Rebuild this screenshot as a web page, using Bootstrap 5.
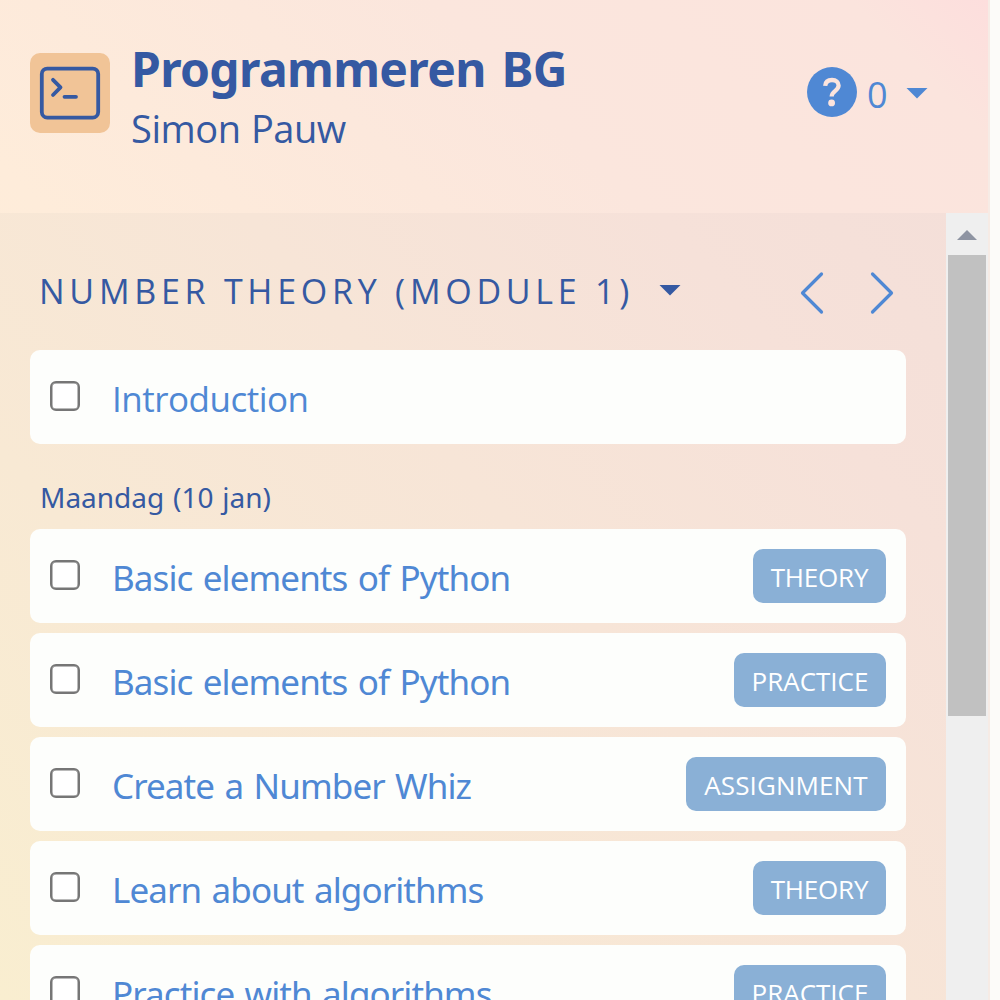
<!DOCTYPE html>
<html lang="nl">
<head>
<meta charset="utf-8">
<meta name="viewport" content="width=device-width, initial-scale=1">
<title>Programmeren BG</title>
<link href="https://cdn.jsdelivr.net/npm/bootstrap@5.3.0/dist/css/bootstrap.min.css" rel="stylesheet">
<style>
  :root { --ink: #3559a2; --blue: #4f88d4; }
  body { font-family: "Open Sans", "Noto Sans", sans-serif; background: #fcfbf9; color: var(--ink); height: 1000px; }
  .side { width: 990px; height: 1000px; border-right: 2px solid #f6ebe5; background: linear-gradient(45deg, #fdf1d5 0%, #feecda 42%, #fbe6dd 72%, #fbe4dd 93%, #fddedd 100%); }
  .top-area { height: 213px; padding: 43px 60px 0 30px; }
  .logo { width: 80px; height: 80px; margin-top: 10px; border-radius: 10px; background: #f1c497; }
  .logo svg, .q-icon, .arrow { display: block; }
  .heading { margin-left: 21px; white-space: nowrap; }
  .course { font-family: "Noto Sans", sans-serif; font-size: 48px; font-weight: 700; line-height: 52px; letter-spacing: -.65px; word-spacing: 4px; }
  .user { font-size: 38px; line-height: 54px; margin-top: 6px; letter-spacing: -.45px; word-spacing: 1px; }
  .help { width: 121px; margin-top: 24px; height: 50px; color: var(--blue); font-size: 36px; }
  .help-count { margin-left: 10px; padding-top: 5px; line-height: 54px; width: 19px; }
  .tri { width: 22px; height: 11px; background: currentColor; clip-path: polygon(0 0, 100% 0, 50% 100%); }
  .help .tri { margin-top: 2px; }
  .lower { height: 787px; background: linear-gradient(50deg, #f9eed0 0%, #f8e9d4 28%, #f7e5d7 55%, #f6e1d9 80%, #f4dfd9 100%); }
  .list-area { width: 946px; padding: 55px 40px 0 30px; }
  .module-bar { height: 50px; padding: 0 12px 0 9px; margin-bottom: 32px; white-space: nowrap; }
  .module-name { font-size: 34px; line-height: 46px; margin-top: -4px; letter-spacing: 4.75px; width: 620px; }
  .module-bar .tri { margin-top: -6px; }
  .item-card { height: 94px; border-radius: 10px; background: #fdfefc; padding: 0 20px; margin-bottom: 10px; color: var(--blue); }
  .tick { appearance: none; width: 30px; height: 30px; border: 2px solid #767676; border-radius: 6px; background: #fff; margin: -2px 32px 0 0; box-shadow: inset 0 0 0 .5px #767676; }
  .item-name { font-family: "Noto Sans", sans-serif; font-size: 35px; line-height: 50px; padding-top: 4px; letter-spacing: -.92px; word-spacing: 2.2px; white-space: nowrap; }
  .item-intro { font-family: "Open Sans", sans-serif; letter-spacing: -.5px; }
  .kind { height: 54px; border-radius: 10px; background: #8ab0d6; color: #fff; font-size: 26px; line-height: 56px; text-align: center; white-space: nowrap; }
  .k-theory { width: 133px; letter-spacing: -.2px; }
  .k-practice { width: 152px; letter-spacing: 0; }
  .k-assign { width: 200px; letter-spacing: .1px; }
  .day { font-family: "Noto Sans", sans-serif; font-size: 28px; line-height: 40px; margin: 33px 0 12px 10px; word-spacing: 1.500px; }
  .bar-track { width: 42px; background: #efefef; padding-left: 2px; }
  .bar-button { height: 42px; padding: 17px 0 0 9px; color: #8e94a2; }
  .bar-thumb { width: 38px; height: 461px; background: #c1c1c1; }
</style>
</head>
<body class="overflow-hidden">
<div class="side overflow-hidden">
  <header class="top-area d-flex align-items-start">
    <div class="logo flex-shrink-0">
      <svg width="80" height="80" viewBox="0 0 80 80" fill="none" stroke="#3559a2" stroke-width="3.8" stroke-linecap="round" stroke-linejoin="round">
        <rect x="11.8" y="15.6" width="56.4" height="49" rx="5.5"/>
        <path d="M23 26.800l7.500 7.600-7.500 7.600M34.500 43.800h11.500"/>
      </svg>
    </div>
    <div class="heading">
      <h1 class="course mb-0">Programmeren BG</h1>
      <div class="user">Simon Pauw</div>
    </div>
    <div class="help ms-auto d-flex align-items-center">
      <svg class="q-icon flex-shrink-0" width="50" height="50" viewBox="0 0 50 50">
        <circle cx="25" cy="25" r="25" fill="#4f88d4"/>
        <path d="M18.200 18.800c.3-3.800 2.600-5.800 6.800-5.800 4.200 0 6.600 2.200 6.600 5.600 0 5.300-6.900 5.200-6.900 11" fill="none" stroke="#fce4dd" stroke-width="4.300"/>
        <circle cx="24.600" cy="35.900" r="3.400" fill="#fce4dd"/>
      </svg>
      <span class="help-count">0</span>
      <span class="tri ms-auto"></span>
    </div>
  </header>
  <div class="lower d-flex">
    <main class="list-area">
      <div class="module-bar d-flex align-items-center">
        <div class="module-name">NUMBER THEORY (MODULE 1)</div>
        <span class="tri"></span>
        <svg class="arrow ms-auto" width="94" height="44" viewBox="0 0 94 44" fill="none" stroke="#4f88d4" stroke-width="3.2" stroke-linecap="round" stroke-linejoin="round"><path d="M21.500 3L2.500 22l19 19M72.500 3l19 19-19 19"/></svg>
      </div>
      <div class="item-card d-flex align-items-center"><input class="tick" type="checkbox"><span class="item-name item-intro">Introduction</span></div>
      <div class="day">Maandag (10 jan)</div>
      <div class="item-card d-flex align-items-center"><input class="tick" type="checkbox"><span class="item-name">Basic elements of Python</span><span class="kind k-theory ms-auto">THEORY</span></div>
      <div class="item-card d-flex align-items-center"><input class="tick" type="checkbox"><span class="item-name">Basic elements of Python</span><span class="kind k-practice ms-auto">PRACTICE</span></div>
      <div class="item-card d-flex align-items-center"><input class="tick" type="checkbox"><span class="item-name">Create a Number Whiz</span><span class="kind k-assign ms-auto">ASSIGNMENT</span></div>
      <div class="item-card d-flex align-items-center"><input class="tick" type="checkbox"><span class="item-name">Learn about algorithms</span><span class="kind k-theory ms-auto">THEORY</span></div>
      <div class="item-card d-flex align-items-center"><input class="tick" type="checkbox"><span class="item-name">Practice with algorithms</span><span class="kind k-practice ms-auto">PRACTICE</span></div>
    </main>
    <div class="bar-track">
      <div class="bar-button"><svg class="arrow" width="20" height="10"><path d="M0 10L10 0l10 10z" fill="#8e94a2"/></svg></div>
      <div class="bar-thumb"></div>
    </div>
  </div>
</div>
<script src="https://cdn.jsdelivr.net/npm/bootstrap@5.3.0/dist/js/bootstrap.bundle.min.js"></script>
</body>
</html>
